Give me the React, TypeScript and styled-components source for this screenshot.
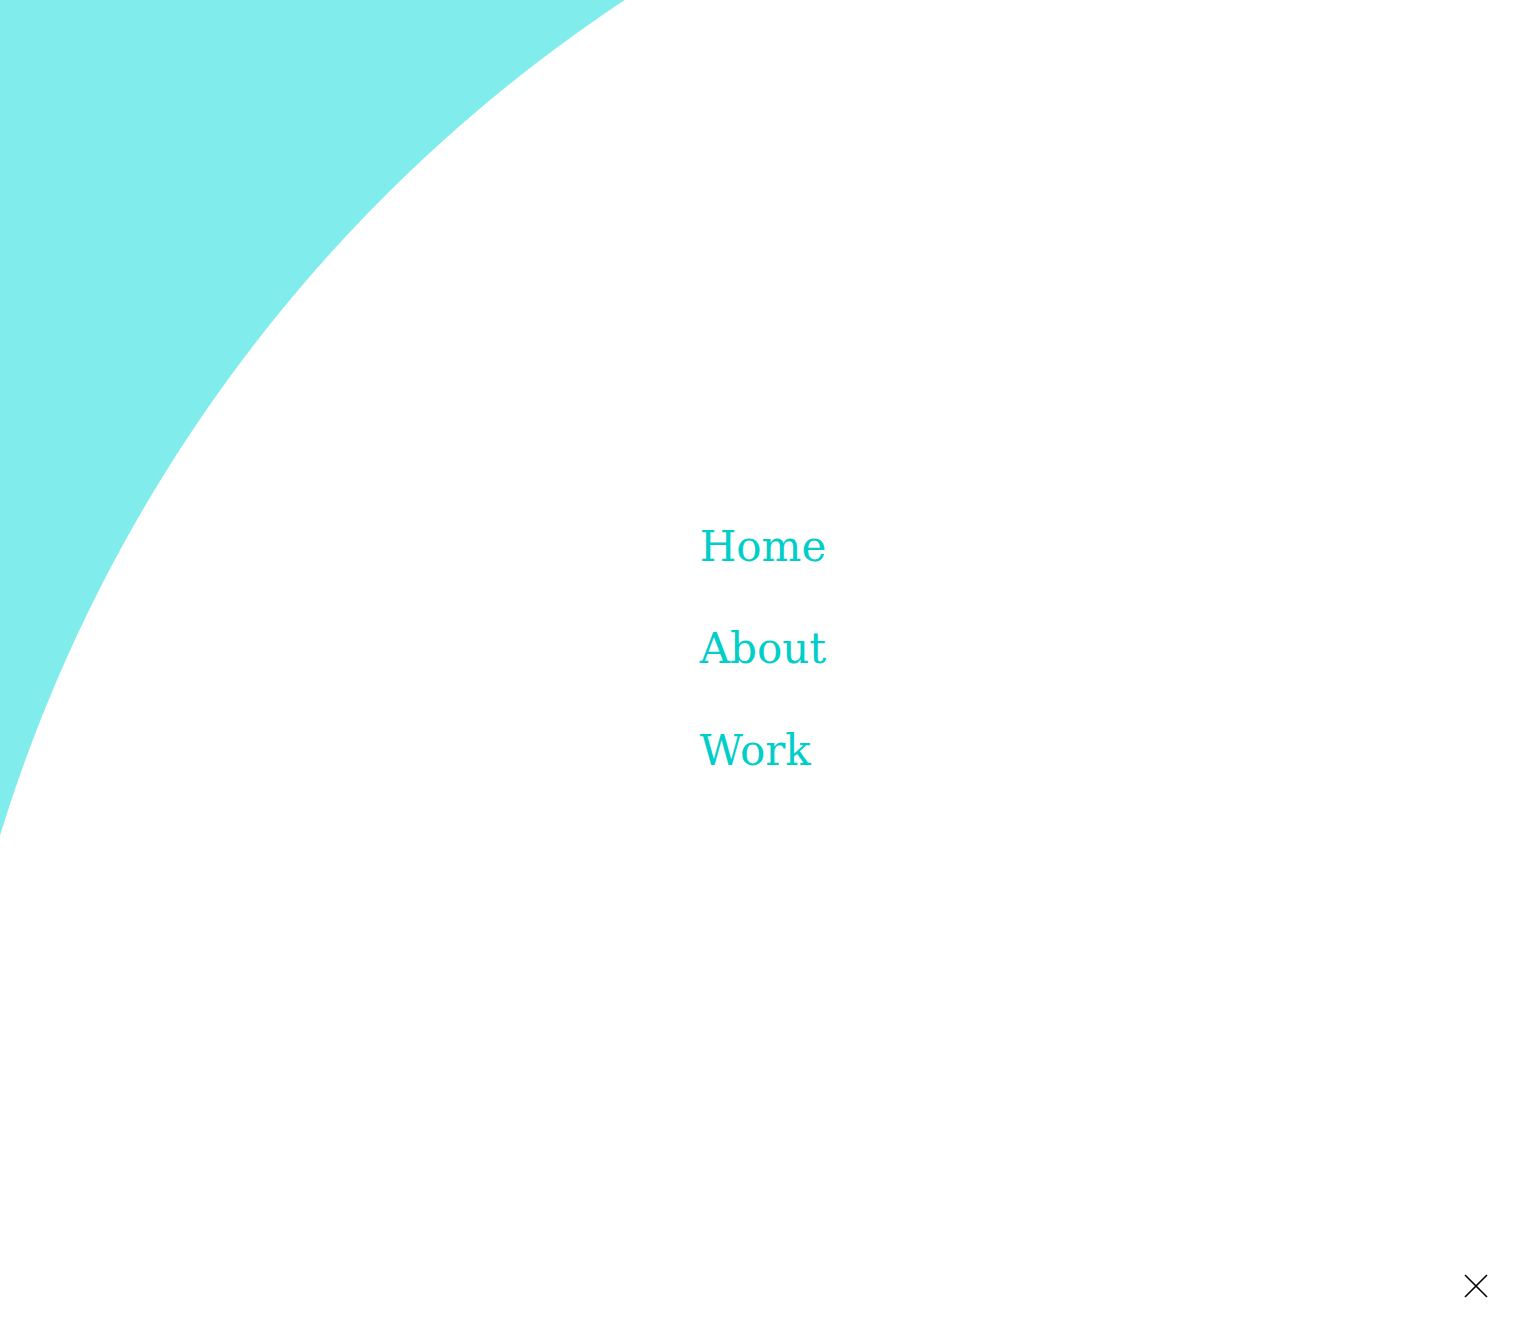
import React from "react";
import styled, { createGlobalStyle } from "styled-components";

const GlobalStyle = createGlobalStyle`
  html, body {
    margin: 0;
    padding: 0;
    background: #ffffff;
  }
  * { box-sizing: border-box; }
`;

const Overlay = styled.div`
  position: relative;
  width: 1526px;
  height: 1331px;
  overflow: hidden;
  display: flex;
  align-items: center;
  justify-content: center;
  background-color: #81ecec;
  background-image: radial-gradient(
    circle at 1477.5px 1289px,
    #ffffff 1545px,
    #81ecec 1546px
  );
`;

const Menu = styled.nav`
  display: flex;
  flex-direction: column;
  align-items: flex-start;
  margin-bottom: 34px;
`;

const MenuLink = styled.a`
  display: block;
  font-family: "DejaVu Serif", "Liberation Serif", serif;
  font-size: 42px;
  line-height: 102px;
  font-weight: 400;
  color: #00cec9;
  text-decoration: none;
  cursor: pointer;
`;

const CloseButton = styled.button`
  position: absolute;
  right: 26px;
  bottom: 21px;
  width: 48px;
  height: 48px;
  padding: 0;
  border: none;
  background: transparent;
  display: flex;
  align-items: center;
  justify-content: center;
  cursor: pointer;
`;

const links = ["Home", "About", "Work"];

export default function App() {
  return (
    <>
      <GlobalStyle />
      <Overlay>
        <Menu>
          {links.map((l) => (
            <MenuLink key={l} href="#">
              {l}
            </MenuLink>
          ))}
        </Menu>
        <CloseButton aria-label="Close menu">
          <svg width="24" height="24" viewBox="0 0 24 24" fill="none">
            <path d="M1 1 L23 23 M23 1 L1 23" stroke="#000" strokeWidth="1.6" />
          </svg>
        </CloseButton>
      </Overlay>
    </>
  );
}
